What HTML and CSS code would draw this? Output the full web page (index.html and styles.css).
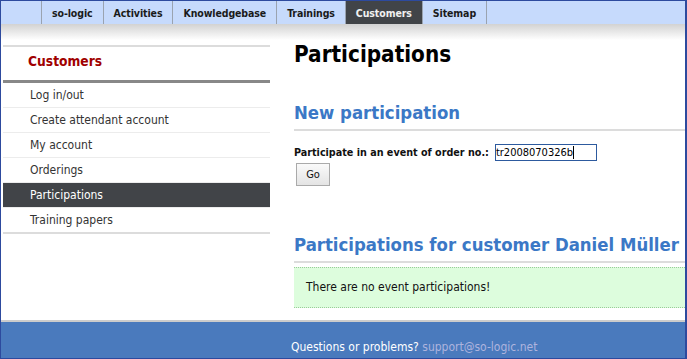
FILE: index.html
```html
<!DOCTYPE html>
<html>
<head>
<meta charset="utf-8">
<link rel="stylesheet" href="styles.css">
</head>
<body>
<div class="page">
  <nav class="topnav">
    <a class="tab">so-logic</a>
    <a class="tab">Activities</a>
    <a class="tab">Knowledgebase</a>
    <a class="tab">Trainings</a>
    <a class="tab active">Customers</a>
    <a class="tab last">Sitemap</a>
  </nav>
  <div class="shade"></div>
  <div class="content">
    <aside class="sidebar">
      <h3 class="side-title">Customers</h3>
      <ul class="side-menu">
        <li>Log in/out</li>
        <li>Create attendant account</li>
        <li>My account</li>
        <li>Orderings</li>
        <li class="current">Participations</li>
        <li>Training papers</li>
      </ul>
    </aside>
    <main class="main">
      <h1 class="title">Participations</h1>
      <h2 class="section first">New participation</h2>
      <form class="form">
        <div class="row"><label>Participate in an event of order no.:</label><span class="input">tr2008070326b<span class="caret"></span></span></div>
        <button type="button" class="btn">Go</button>
      </form>
      <h2 class="section second">Participations for customer Daniel Müller</h2>
      <div class="notice">There are no event participations!</div>
    </main>
  </div>
  <footer class="footer">Questions or problems? <span class="mail">support@so-logic.net</span></footer>
</div>
</body>
</html>
```
FILE: styles.css
```css
html, body { margin: 0; padding: 0; background: #fff; }
body { font-family: "DejaVu Sans", sans-serif; font-stretch: condensed; color: #222; }
.page {
  width: 687px; height: 359px; box-sizing: border-box;
  border: 1px solid #2d4a9e; border-right-width: 2px;
  display: flex; flex-direction: column; overflow: hidden;
}
.topnav {
  flex-shrink: 0; height: 23px; background: #c6dafc; display: flex; padding-left: 40px;
}
.tab {
  display: flex; align-items: center; padding: 0 10px;
  border-left: 1px solid #9aa3b0; font-size: 10.5px; font-weight: bold; color: #1a1a1a;
  letter-spacing: -0.1px;
}
.tab.last { border-right: 1px solid #9aa3b0; }
.tab.active { background: #414448; color: #f0f0f0; }
.shade { flex-shrink: 0; height: 16px; background: linear-gradient(#d2d2d2, #fff); }
.content { display: flex; flex: 1; min-height: 0; overflow: hidden; }
.sidebar { flex-shrink: 0; width: 267px; margin-left: 2px; margin-top: 5px; }
.side-title {
  margin: 0; border-top: 2px solid #dcdcdc; border-bottom: 3px solid #888;
  color: #a00000; font-size: 13.7px; font-weight: bold; padding: 6px 0 0 25px; height: 27px; box-sizing: content-box;
}
.side-menu { list-style: none; margin: 0; padding: 0; border-bottom: 2px solid #dcdcdc; }
.side-menu li {
  height: 24px; line-height: 24px; font-size: 12px; padding-left: 27px; color: #333;
  border-bottom: 1px solid #ececec;
}
.side-menu li:last-child { border-bottom: 0; }
.side-menu li.current { background: #414448; color: #fff; }
.main { flex: 1; margin-left: 24px; }
.title {
  margin: 0; font-size: 22.3px; font-weight: bold; color: #000; line-height: 28px;
}
.section {
  margin: 0; font-size: 18.4px; font-weight: bold; color: #3b78c6; border-bottom: 2px solid #dcdcdc;
  line-height: 24px; padding-bottom: 4px; white-space: nowrap;
}
.section.first { margin-top: 33px; }
.section.second { margin-top: 47px; }
.form { margin-top: 13px; }
.row { display: flex; align-items: center; font-size: 10.7px; font-weight: bold; color: #111; }
.input {
  margin-left: 6px; width: 100px; height: 15px; border: 1px solid #2d5a9e; font-weight: normal;
  font-size: 11px; line-height: 15px; display: flex; align-items: center; color: #000;
}
.caret { display: inline-block; width: 1px; height: 13px; background: #000; }
.btn {
  margin: 2px 0 0 2px; width: 34px; height: 23px; font: 11px "DejaVu Sans", sans-serif; font-stretch: condensed;
  background: linear-gradient(#fafafa, #e4e4e4); border: 1px solid #aaa; color: #111; padding: 0;
}
.notice {
  margin-top: 4px; background: #ddfddd; border-top: 1px dotted #9c9; border-bottom: 1px dotted #9c9;
  height: 39px; line-height: 39px; font-size: 12px; padding-left: 12px; color: #111;
}
.footer {
  flex-shrink: 0; margin-top: auto; height: 36px; border-top: 2px solid #ccc; background: #4a7abd;
  color: #fff; font-size: 12px; padding-left: 290px; line-height: 50px; box-sizing: content-box;
}
.mail { color: #aeb4de; }
```
